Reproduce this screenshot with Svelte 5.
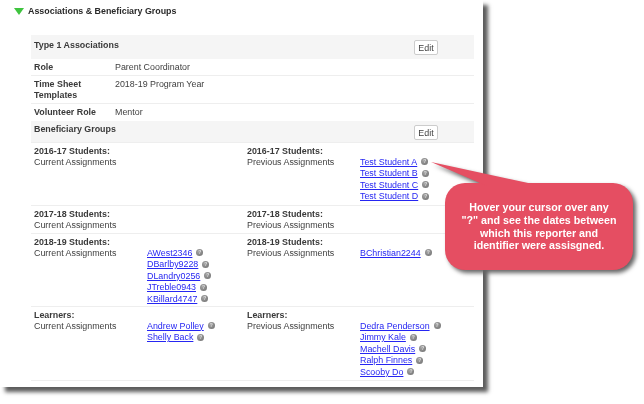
<script>
  const groups = [
    { title: '2016-17 Students:', current: [], previous: ['Test Student A', 'Test Student B', 'Test Student C', 'Test Student D'], height: 63 },
    { title: '2017-18 Students:', current: [], previous: [], height: 28 },
    { title: '2018-19 Students:', current: ['AWest2346', 'DBarlby9228', 'DLandry0256', 'JTreble0943', 'KBillard4747'], previous: ['BChristian2244'], height: 73 },
    { title: 'Learners:', current: ['Andrew Polley', 'Shelly Back'], previous: ['Dedra Penderson', 'Jimmy Kale', 'Machell Davis', 'Ralph Finnes', 'Scooby Do'], height: 74 }
  ];
</script>

{#snippet links(names)}
  <div class="links">
    {#each names as name}
      <div class="link-row"><a href="#top">{name}</a><span class="help">?</span></div>
    {/each}
  </div>
{/snippet}

<div class="page">
  <div class="panel">
    <div class="section-title">
      <svg width="10" height="7" viewBox="0 0 10 7"><path d="M0 0h10L5 7z" fill="#3fc43f" /></svg>
      <span>Associations &amp; Beneficiary Groups</span>
    </div>

    <div class="table">
      <div class="band first">
        <b>Type 1 Associations</b>
        <button>Edit</button>
      </div>
      <div class="row role"><b>Role</b><span>Parent Coordinator</span></div>
      <div class="row sheet"><b>Time Sheet<br />Templates</b><span>2018-19 Program Year</span></div>
      <div class="row volunteer"><b>Volunteer Role</b><span>Mentor</span></div>
      <div class="band second">
        <b>Beneficiary Groups</b>
        <button>Edit</button>
      </div>

      {#each groups as g}
        <div class="group" style="height: {g.height}px">
          <div class="label"><b>{g.title}</b><br />Current Assignments</div>
          {@render links(g.current)}
          <div class="label"><b>{g.title}</b><br />Previous Assignments</div>
          {@render links(g.previous)}
        </div>
      {/each}
    </div>
  </div>

  <div class="callout">
    <svg class="tail" width="115" height="24" viewBox="0 0 115 24">
      <path d="M0 0L111 24H56z" fill="#e54e62" />
    </svg>
    <div class="bubble">
      <p>Hover your cursor over any<br />"?" and see the dates between<br />which this reporter and<br />identifier were assisgned.</p>
    </div>
  </div>
</div>

<style>
  :global(body) {
    margin: 0;
    background: #fff;
  }

  .page {
    position: relative;
    width: 644px;
    height: 404px;
    overflow: hidden;
    font-family: "Liberation Sans", Arial, sans-serif;
    font-size: 8.9px;
    color: #3f3f3f;
  }

  .panel {
    width: 483px;
    height: 387px;
    padding: 5px 9px 0 0;
    box-sizing: border-box;
    background: #fff;
    box-shadow: 5px 5px 4px #5c5c5c;
    filter: blur(0.3px);
  }

  .section-title {
    display: flex;
    align-items: center;
    gap: 4px;
    height: 12px;
    padding-left: 14px;
    font-weight: bold;
    color: #2a2a2a;
  }

  .table {
    margin: 18px 0 0 31px;
  }

  b {
    color: #3a3a3a;
  }

  .band {
    display: flex;
    justify-content: space-between;
    padding: 5px 36px 0 3px;
    background: #f5f5f5;
    box-sizing: border-box;
    line-height: 11px;
  }

  .band.first {
    height: 24px;
  }

  .band.second {
    height: 22px;
    padding-top: 3px;
    border-bottom: 1px solid #eee;
  }

  button {
    width: 24px;
    height: 15px;
    padding: 0;
    background: #fff;
    border: 1px solid #ccc;
    border-radius: 2px;
    font: 8.9px "Liberation Sans", Arial, sans-serif;
    color: #3f3f3f;
  }

  .band.second button {
    margin-top: 1px;
  }

  .row {
    display: grid;
    grid-template-columns: 81px 1fr;
    padding: 3px 3px 0;
    box-sizing: border-box;
    line-height: 10.5px;
    border-bottom: 1px solid #eee;
  }

  .row.role {
    height: 17px;
  }

  .row.sheet {
    height: 28px;
  }

  .row.volunteer {
    height: 17px;
    border-bottom: none;
  }

  .group {
    display: grid;
    grid-template-columns: 113px 100px 113px 1fr;
    padding: 3px 3px 0;
    box-sizing: border-box;
    line-height: 10.5px;
    border-bottom: 1px solid #eee;
  }

  .links {
    padding-top: 10px;
  }

  .link-row {
    display: flex;
    align-items: center;
    gap: 4px;
    height: 11.5px;
  }

  a {
    color: #2626f2;
    text-decoration: underline;
  }

  .help {
    width: 7px;
    height: 7px;
    border-radius: 50%;
    background: radial-gradient(circle at 40% 35%, #a8a8a8, #6a6a6a);
    color: #ddd;
    font-size: 5px;
    font-weight: bold;
    line-height: 7px;
    text-align: center;
  }

  .callout {
    position: absolute;
    left: 431px;
    top: 162px;
    filter: drop-shadow(3px 3px 2px #666);
  }

  .tail {
    display: block;
    margin-bottom: -3px;
  }

  .bubble {
    display: flex;
    align-items: center;
    justify-content: center;
    width: 188px;
    height: 87px;
    margin-left: 14px;
    background: #e54e62;
    border-radius: 20px;
  }

  .bubble p {
    margin: 0;
    color: #fff;
    font-size: 10.7px;
    font-weight: bold;
    line-height: 12.7px;
    text-align: center;
  }
</style>
